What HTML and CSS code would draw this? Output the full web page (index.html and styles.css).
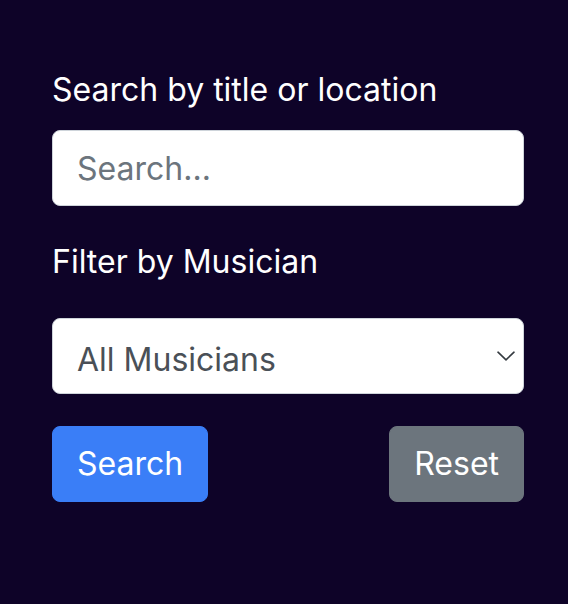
FILE: index.html
```html
<!DOCTYPE html>
<html lang="en">
<head>
<meta charset="utf-8">
<title>Search</title>
<link rel="stylesheet" href="styles.css">
</head>
<body>
<form class="filter-form">
  <div class="field">
    <label class="field-label" for="q">Search by title or location</label>
    <input class="control" id="q" type="text" placeholder="Search...">
  </div>
  <div class="field">
    <label class="field-label field-label-spaced" for="m">Filter by Musician</label>
    <div class="select-wrap">
      <select class="control select-control" id="m">
        <option>All Musicians</option>
      </select>
      <svg class="chevron" width="18" height="10" viewBox="0 0 18 10" aria-hidden="true">
        <path d="M1 1.2 L9 8.8 L17 1.2" fill="none" stroke="#343a40" stroke-width="1.6" stroke-linecap="round" stroke-linejoin="round"/>
      </svg>
    </div>
  </div>
  <div class="actions">
    <button type="button" class="btn btn-primary">Search</button>
    <button type="reset" class="btn btn-secondary">Reset</button>
  </div>
</form>
</body>
</html>
```
FILE: styles.css
```css
html, body {
  margin: 0;
  padding: 0;
  background: #0e0328;
}
body {
  font-family: Inter, "Liberation Sans", sans-serif;
  font-size: 32px;
  line-height: 48px;
  color: #ffffff;
}
.filter-form {
  width: 472px;
  padding: 66px 0 0 52px;
  display: flex;
  flex-direction: column;
  gap: 32px;
}
.field {
  display: flex;
  flex-direction: column;
}
.field-label {
  display: block;
  margin-bottom: 16px;
  color: #ffffff;
}
.field-label-spaced {
  margin-bottom: 32px;
}
.control {
  box-sizing: border-box;
  width: 100%;
  height: 76px;
  margin: 0;
  padding: 12px 24px;
  font-family: inherit;
  font-size: 32px;
  line-height: 48px;
  color: #495057;
  background: #ffffff;
  border: 1px solid #ced4da;
  border-radius: 8px;
  outline: none;
}
.control::placeholder {
  color: #6c757d;
  opacity: 1;
}
.select-wrap {
  position: relative;
}
.select-control {
  -webkit-appearance: none;
  appearance: none;
  padding: 16px 60px 8px 24px;
  color: #4a5057;
}
.chevron {
  position: absolute;
  right: 9px;
  top: 33px;
  pointer-events: none;
}
.actions {
  display: flex;
  justify-content: space-between;
  align-items: center;
}
.btn {
  box-sizing: border-box;
  height: 76px;
  padding: 12px 24px;
  font-family: inherit;
  font-size: 32px;
  line-height: 48px;
  color: #ffffff;
  border: 1px solid transparent;
  border-radius: 8px;
  cursor: pointer;
}
.btn-primary {
  background: #3a7ef7;
  border-color: #3a7ef7;
}
.btn-secondary {
  background: #6c757d;
  border-color: #6c757d;
}
```
